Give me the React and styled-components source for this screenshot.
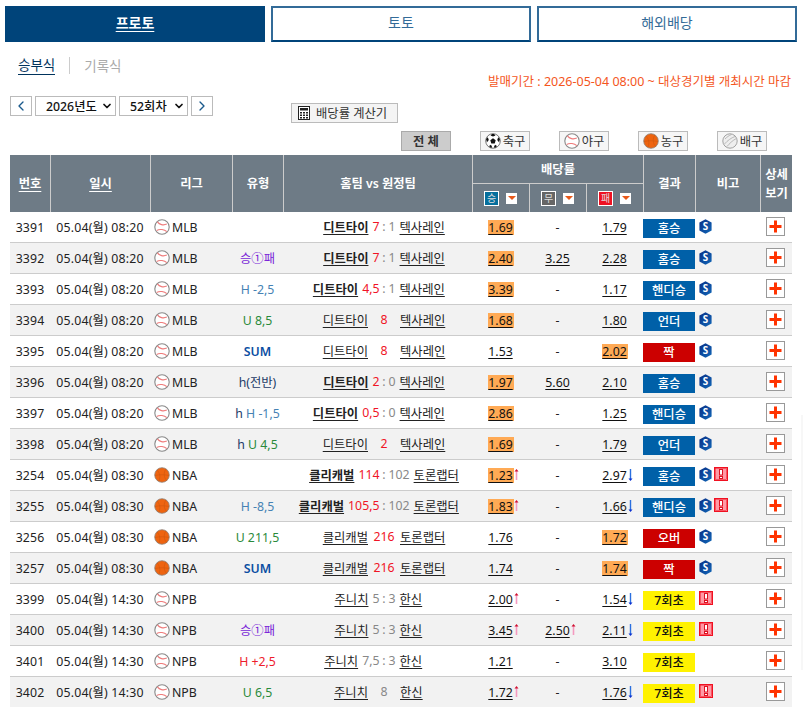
import React from 'react';
import styled, { createGlobalStyle } from 'styled-components';
import { ChevronLeft, ChevronRight, ChevronDown } from 'lucide-react';

const GlobalStyle = createGlobalStyle`
	html, body {
		margin: 0;
		padding: 0;
		background: #fff;
		overflow: hidden;
	}
	body {
		font-family: "Noto Sans", "Noto Sans CJK KR", sans-serif;
		font-size: 12.3px;
		color: #222;
	}
`;

const Page = styled.div`
	position: relative;
	width: 803px;
	height: 707px;
	box-sizing: border-box;
	padding: 6px 6px 0 5px;
	overflow: hidden;
`;
const EdgeShade = styled.div`
	position: absolute;
	right: 0;
	top: 415px;
	width: 2px;
	height: 255px;
	background: #f7f7f7;
`;
const Tabs = styled.div`
	display: grid;
	grid-template-columns: repeat(3, 260px);
	gap: 6px;
`;
const Tab = styled.a`
	display: flex;
	align-items: center;
	justify-content: center;
	box-sizing: border-box;
	height: 36px;
	padding-bottom: 4px;
	font-size: 14px;
	border: 2px solid ${props => props.$active ? '#00447a' : '#336b98'};
	border-bottom-color: #00447a;
	background: ${props => props.$active ? '#00447a' : '#fff'};
	color: ${props => props.$active ? '#fff' : '#336b98'};
	font-weight: ${props => props.$active ? 600 : 400};
	text-decoration: ${props => props.$active ? 'underline' : 'none'};
	text-underline-offset: 3px;
`;
const SubBar = styled.div`
	display: flex;
	justify-content: space-between;
	align-items: flex-end;
	height: 47px;
	padding: 0 6px 0 13px;
`;
const SubTabs = styled.div`
	display: flex;
	align-items: center;
	align-self: flex-start;
	margin-top: 14px;
`;
const SubTab = styled.span`
	font-size: 13.5px;
	line-height: 18px;
	color: ${props => props.$active ? '#00335c' : '#aaa'};
	border-bottom: ${props => props.$active ? '1px solid #00335c' : '0'};
`;
const SubDivider = styled.i`
	width: 1px;
	height: 17px;
	margin: 0 14px;
	background: #ccc;
`;
const SalePeriod = styled.div`
	color: #f4561d;
	font-size: 12.5px;
	line-height: 14px;
`;
const ControlRow = styled.div`
	display: flex;
	align-items: flex-start;
	gap: 3px;
	margin: 7px 0 0 5px;
	height: 28px;
`;
const RoundButton = styled.button`
	display: flex;
	align-items: center;
	justify-content: center;
	width: 22px;
	height: 20px;
	padding: 0;
	background: #fff;
	border: 1px solid #bbb;
	color: #1a5a8c;
`;
const SelectWrap = styled.div`
	position: relative;
	width: ${props => props.$width}px;
	height: 20px;
	svg {
		position: absolute;
		right: 3px;
		top: 4px;
		pointer-events: none;
		color: #111;
	}
`;
const Select = styled.select`
	appearance: none;
	width: 100%;
	height: 100%;
	box-sizing: border-box;
	padding: 0 0 0 10px;
	border: 1px solid #bbb;
	border-radius: 0;
	background: #fff;
	color: #111;
	font: 500 12.3px "Noto Sans", "Noto Sans CJK KR", sans-serif;
`;
const CalcButton = styled.button`
	display: flex;
	align-items: center;
	gap: 6px;
	box-sizing: border-box;
	width: 107px;
	height: 20px;
	margin: 7px 0 0 75px;
	padding: 0 0 0 6px;
	background: #f4f4f4;
	border: 1px solid #bbb;
	color: #333;
	font: 12.3px "Noto Sans", "Noto Sans CJK KR", sans-serif;
	white-space: nowrap;
`;
const FilterRow = styled.div`
	display: flex;
	gap: 29px;
	height: 24px;
	margin: 7px 0 0 396px;
`;
const FilterButton = styled.button`
	display: flex;
	align-items: center;
	justify-content: center;
	gap: 2px;
	box-sizing: border-box;
	width: 50px;
	height: 20px;
	padding: 0;
	border: 1px solid ${props => props.$active ? '#aaa' : '#bbb'};
	background: ${props => props.$active ? '#ccc' : '#f6f6f6'};
	color: #333;
	font: ${props => props.$active ? 700 : 400} 12.3px "Noto Sans", "Noto Sans CJK KR", sans-serif;
	white-space: nowrap;
`;
const Table = styled.table`
	width: 782px;
	margin-left: 5px;
	table-layout: fixed;
	border-collapse: separate;
	border-spacing: 0;
`;
const Th = styled.th`
	box-sizing: border-box;
	height: ${props => props.$sub ? 28 : 29}px;
	padding: 0;
	background: #6e7b86;
	color: #fff;
	font-size: 12.3px;
	font-weight: 600;
	line-height: 19px;
	text-align: center;
	border-left: ${props => props.$first ? '0' : '1px solid #ccc'};
	border-bottom: ${props => props.$split ? '1px solid #ccc' : '0'};
	text-decoration: ${props => props.$link ? 'underline' : 'none'};
	text-underline-offset: 3px;
`;
const SortCell = styled.div`
	display: flex;
	align-items: center;
	justify-content: flex-start;
	gap: 7px;
	padding-left: 11px;
`;
const OutcomeMark = styled.span`
	display: flex;
	align-items: center;
	justify-content: center;
	box-sizing: border-box;
	width: 15px;
	height: 15px;
	border: 1px solid #fff;
	background: ${props => props.$bg};
	color: #ddd;
	font-size: 10px;
	font-weight: 400;
	line-height: 1;
`;
const SortButton = styled.span`
	display: flex;
	align-items: center;
	justify-content: center;
	width: 11px;
	height: 11px;
	background: #fff;
	&::after {
		content: '';
		border: 4px solid transparent;
		border-top: 4px solid #e8591a;
		border-bottom: 0;
	}
`;
const Row = styled.tr`
	background: ${props => props.$alt ? '#f2f2f2' : '#fff'};
`;
const Td = styled.td`
	box-sizing: border-box;
	height: 31px;
	padding: 0;
	border-bottom: 1px solid #ccc;
	text-align: center;
	white-space: nowrap;
	color: #222;
`;
const NumberText = styled.span`
	letter-spacing: ${props => props.$spread}px;
`;
const LeagueCell = styled.div`
	display: flex;
	align-items: center;
	gap: 2px;
	padding-left: 4px;
`;
const TypeLabel = styled.span`
	color: ${props => props.$color};
	font-weight: ${props => props.$bold ? 600 : 400};
`;
const Match = styled.div`
	display: grid;
	grid-template-columns: 1fr auto 1fr;
	padding-left: 13px;
`;
const HomeSide = styled.div`
	display: flex;
	justify-content: flex-end;
	gap: 4px;
`;
const AwaySide = styled.div`
	display: flex;
	justify-content: flex-start;
	gap: 4px;
`;
const Colon = styled.span`
	width: 9px;
	color: #888;
	text-align: center;
`;
const Total = styled.span`
	min-width: 32px;
	color: ${props => props.$muted ? '#888' : '#f01426'};
	text-align: center;
`;
const Team = styled.a`
	color: #222;
	font-weight: ${props => props.$bold ? 600 : 400};
	text-decoration: underline;
	text-underline-offset: 2px;
`;
const Score = styled.span`
	color: ${props => props.$red ? '#f01426' : '#888'};
`;
const Odd = styled.span`
	position: relative;
	display: inline-block;
	min-width: 26px;
	line-height: 15px;
	color: #111;
	background: ${props => props.$hit ? '#ffaa55' : 'transparent'};
	text-decoration: underline;
	text-underline-offset: 2px;
	svg {
		position: absolute;
		left: 100%;
		top: 0;
	}
`;
const ResultCell = styled(Td)`
	vertical-align: top;
	padding-top: 7px;
`;
const ResultBadge = styled.div`
	height: 19px;
	line-height: 19px;
	font-weight: 500;
	background: ${props => props.$bg};
	color: ${props => props.$fg};
`;
const NoteCell = styled(Td)`
	vertical-align: top;
	padding-top: 7px;
`;
const Notes = styled.div`
	display: flex;
	align-items: flex-start;
	gap: 2px;
	padding-left: 4px;
`;
const DetailCell = styled(Td)`
	vertical-align: top;
	padding-top: 5px;
`;
const PlusBox = styled.button`
	display: block;
	box-sizing: border-box;
	width: 19px;
	height: 19px;
	margin: 0 0 0 6px;
	padding: 0;
	border: 1px solid #999;
	background: #fff;
	line-height: 0;
`;

const Baseball = ({ size = 16 }) => (
	<svg width={size} height={size} viewBox="0 0 16 16">
		<circle cx="8" cy="8" r="7.200" fill="#fff" stroke="#888" strokeWidth="1.100" />
		<path d="M3.400 2.900c2 2.800 6 3.800 9.400 2.200M2.600 11.400c3.200-1.700 7.800-1 10.200 1.300" fill="none" stroke="#ef7b7b" strokeWidth="1.100" />
	</svg>
);
const Basketball = ({ size = 16 }) => (
	<svg width={size} height={size} viewBox="0 0 16 16">
		<circle cx="8" cy="8" r="7.300" fill="#ee6410" stroke="#8a8078" strokeWidth="0.800" />
		<path d="M3 3c3 3 3.500 7 2 11M12 1.800c-2.500 3.500-2.500 9 1 12M1 8.500c4-1 10-1 14 0" fill="none" stroke="#c8540e" strokeWidth="0.500" />
	</svg>
);
const SoccerBall = () => (
	<svg width="16" height="16" viewBox="0 0 16 16">
		<circle cx="8" cy="8" r="7.300" fill="#fff" stroke="#555" strokeWidth="0.800" />
		<path d="M8 5.300l2.700 2-1 3.200H6.300l-1-3.200zM7 .9l2 0 1.500 1.500-2.500 1-2.500-1zM1 6l1.800-1.800 1 2.800-1.800 2.300zM15 6l-1.800-1.800-1 2.800 1.800 2.300zM4 13l2-1.300 1.300 2.800-1.800.2zM12 13l-2-1.300-1.300 2.800 1.800.2z" fill="#111" />
	</svg>
);
const Volleyball = () => (
	<svg width="16" height="16" viewBox="0 0 16 16">
		<circle cx="8" cy="8" r="7.200" fill="#eee" stroke="#999" strokeWidth="0.900" />
		<path d="M2.500 11c3-3.500 6.500-6 10.500-7.500M5 13.500c2.500-3 5.500-6 9.300-8M3 6c2-2 4-3.500 6.500-4.500" fill="none" stroke="#aaa" strokeWidth="0.800" />
	</svg>
);
const Calculator = () => (
	<svg width="12" height="14" viewBox="0 0 12 14">
		<rect x="0.500" y="0.500" width="11" height="13" fill="#fff" stroke="#222" />
		<rect x="2" y="2" width="8" height="2.500" fill="#222" />
		<path d="M2 6h2v1.500H2zM5 6h2v1.500H5zM8 6h2v1.500H8zM2 8.500h2V10H2zM5 8.500h2V10H5zM8 8.500h2V10H8zM2 11h2v1.500H2zM5 11h2v1.500H5zM8 11h2v1.500H8z" fill="#222" />
	</svg>
);
const SpecialIcon = () => (
	<svg width="13" height="15" viewBox="0 0 13 16">
		<defs>
			<linearGradient id="hexFill" x1="0" y1="0" x2="1" y2="1">
				<stop offset="0" stopColor="#0a2f86" />
				<stop offset="1" stopColor="#1168b8" />
			</linearGradient>
		</defs>
		<path d="M6.500 0.300L13 3.800v8.400l-6.500 3.600L0 12.200V3.800z" fill="url(#hexFill)" />
		<text x="6.500" y="11.800" textAnchor="middle" fill="#fff" fontSize="10.500" fontWeight="700" fontFamily="Noto Sans">S</text>
	</svg>
);
const AlertIcon = () => (
	<svg width="14" height="14" viewBox="0 0 14 14">
		<rect x="0.500" y="0.500" width="13" height="13" fill="#ff9aa6" stroke="#f01020" />
		<rect x="1.500" y="1.500" width="11" height="11" fill="none" stroke="#f01020" strokeWidth="0.500" />
		<rect x="5.500" y="2.500" width="3" height="5.500" fill="#fff" stroke="#e01020" />
		<rect x="5.500" y="9.500" width="3" height="2" fill="#fff" stroke="#e01020" />
	</svg>
);
const PlusIcon = () => (
	<svg width="17" height="17" viewBox="0 0 17 17">
		<path d="M7 2.500h3V7h4.500v3H10v4.500H7V10H2.500V7H7z" fill="#ff3300" />
	</svg>
);
const UpArrow = () => (
	<svg width="5" height="14" viewBox="0 0 5 14">
		<path d="M2.500 3v9" stroke="#f49ac0" strokeWidth="1.600" />
		<path d="M0.500 3.500L2.500 1l2 2.500z" fill="#d01030" />
	</svg>
);
const DownArrow = () => (
	<svg width="5" height="14" viewBox="0 0 5 14">
		<path d="M2.500 1v10" stroke="#2a6fe0" strokeWidth="1.400" />
		<path d="M0.500 10.500L2.500 13l2-2.500z" fill="#0a30d0" />
	</svg>
);

const TONES = {
	purple: '#7a1fd8',
	blue: '#4682b4',
	green: '#2a8a3a',
	navy: '#0b4ea2',
	red: '#ee1c2c',
	dark: '#1c3a66',
};
const RESULTS = {
	blue: { bg: '#0060a8', fg: '#fff' },
	red: { bg: '#cc0000', fg: '#fff' },
	yellow: { bg: '#fff200', fg: '#111' },
};

const mlb = { date: '05.04(월) 08:20', league: 'MLB', ball: 'base', home: '디트타이', away: '텍사레인' };
const nba0 = { date: '05.04(월) 08:30', league: 'NBA', ball: 'basket', home: '클리캐벌', away: '토론랩터' };
const npb = { date: '05.04(월) 14:30', league: 'NPB', ball: 'base', home: '주니치', away: '한신' };

const rows = [
	{ ...mlb, no: 3391, hs: '7', as: '1', red: true, bold: true, odds: [['1.69', 1], null, ['1.79']], res: '홈승', rc: 'blue', s: true },
	{ ...mlb, no: 3392, type: [['승①패', 'purple']], hs: '7', as: '1', red: true, bold: true, odds: [['2.40', 1], ['3.25'], ['2.28']], res: '홈승', rc: 'blue', s: true },
	{ ...mlb, no: 3393, type: [['H -2,5', 'blue']], hs: '4,5', as: '1', red: true, bold: true, odds: [['3.39', 1], null, ['1.17']], res: '핸디승', rc: 'blue', s: true },
	{ ...mlb, no: 3394, type: [['U 8,5', 'green']], total: '8', odds: [['1.68', 1], null, ['1.80']], res: '언더', rc: 'blue', s: true },
	{ ...mlb, no: 3395, type: [['SUM', 'navy', true]], total: '8', odds: [['1.53'], null, ['2.02', 1]], res: '짝', rc: 'red', s: true },
	{ ...mlb, no: 3396, type: [['h(전반)', 'dark']], hs: '2', as: '0', red: true, bold: true, odds: [['1.97', 1], ['5.60'], ['2.10']], res: '홈승', rc: 'blue', s: true },
	{ ...mlb, no: 3397, type: [['h ', 'dark'], ['H -1,5', 'blue']], hs: '0,5', as: '0', red: true, bold: true, odds: [['2.86', 1], null, ['1.25']], res: '핸디승', rc: 'blue', s: true },
	{ ...mlb, no: 3398, type: [['h ', 'dark'], ['U 4,5', 'green']], total: '2', odds: [['1.69', 1], null, ['1.79']], res: '언더', rc: 'blue', s: true },
	{ ...nba0, no: 3254, hs: '114', as: '102', red: true, bold: true, odds: [['1.23', 1, 'up'], null, ['2.97', 0, 'down']], res: '홈승', rc: 'blue', s: true, alert: true },
	{ ...nba0, no: 3255, type: [['H -8,5', 'blue']], hs: '105,5', as: '102', red: true, bold: true, odds: [['1.83', 1, 'up'], null, ['1.66', 0, 'down']], res: '핸디승', rc: 'blue', s: true, alert: true },
	{ ...nba0, no: 3256, type: [['U 211,5', 'green']], total: '216', odds: [['1.76'], null, ['1.72', 1]], res: '오버', rc: 'red', s: true },
	{ ...nba0, no: 3257, type: [['SUM', 'navy', true]], total: '216', odds: [['1.74'], null, ['1.74', 1]], res: '짝', rc: 'red', s: true },
	{ ...npb, no: 3399, hs: '5', as: '3', odds: [['2.00', 0, 'up'], null, ['1.54', 0, 'down']], res: '7회초', rc: 'yellow', alert: true },
	{ ...npb, no: 3400, type: [['승①패', 'purple']], hs: '5', as: '3', odds: [['3.45', 0, 'up'], ['2.50', 0, 'up'], ['2.11', 0, 'down']], res: '7회초', rc: 'yellow', alert: true },
	{ ...npb, no: 3401, type: [['H +2,5', 'red']], hs: '7,5', as: '3', odds: [['1.21'], null, ['3.10']], res: '7회초', rc: 'yellow' },
	{ ...npb, no: 3402, type: [['U 6,5', 'green']], total: '8', muted: true, odds: [['1.72', 0, 'up'], null, ['1.76', 0, 'down']], res: '7회초', rc: 'yellow', alert: true },
];

const COLS = [40, 100, 82, 51, 189, 57, 57, 57, 52, 65, 32];

function OddValue({ odd }) {
	if (!odd) return '-';
	const [value, hit, move] = odd;
	return (
		<Odd $hit={hit}>
			{value}
			{move === 'up' && <UpArrow />}
			{move === 'down' && <DownArrow />}
		</Odd>
	);
}

function MatchCell({ row }) {
	return (
		<Match>
			<HomeSide>
				<Team $bold={row.bold}>{row.home}</Team>
				{row.hs && <Score $red={row.red}>{row.hs}</Score>}
			</HomeSide>
			{row.total ? <Total $muted={row.muted}>{row.total}</Total> : <Colon>:</Colon>}
			<AwaySide>
				{row.as && <Score>{row.as}</Score>}
				<Team>{row.away}</Team>
			</AwaySide>
		</Match>
	);
}

export default function App() {
	return (
		<Page>
			<GlobalStyle />
			<Tabs>
				<Tab $active>프로토</Tab>
				<Tab>토토</Tab>
				<Tab>해외배당</Tab>
			</Tabs>
			<SubBar>
				<SubTabs>
					<SubTab $active>승부식</SubTab>
					<SubDivider />
					<SubTab>기록식</SubTab>
				</SubTabs>
				<SalePeriod>발매기간 : 2026-05-04 08:00 ~ 대상경기별 개최시간 마감</SalePeriod>
			</SubBar>
			<ControlRow>
				<RoundButton><ChevronLeft size={16} strokeWidth={2} /></RoundButton>
				<SelectWrap $width={81}>
					<Select defaultValue="2026"><option value="2026">2026년도</option></Select>
					<ChevronDown size={12} strokeWidth={3.500} />
				</SelectWrap>
				<SelectWrap $width={69}>
					<Select defaultValue="52"><option value="52">52회차</option></Select>
					<ChevronDown size={12} strokeWidth={3.500} />
				</SelectWrap>
				<RoundButton><ChevronRight size={16} strokeWidth={2} /></RoundButton>
				<CalcButton><Calculator />배당률 계산기</CalcButton>
			</ControlRow>
			<FilterRow>
				<FilterButton $active>전 체</FilterButton>
				<FilterButton><SoccerBall />축구</FilterButton>
				<FilterButton><Baseball />야구</FilterButton>
				<FilterButton><Basketball />농구</FilterButton>
				<FilterButton><Volleyball />배구</FilterButton>
			</FilterRow>
			<Table>
				<colgroup>
					{COLS.map((w, i) => <col key={i} width={w} />)}
				</colgroup>
				<thead>
					<tr>
						<Th rowSpan={2} $first $link>번호</Th>
						<Th rowSpan={2} $link>일시</Th>
						<Th rowSpan={2}>리그</Th>
						<Th rowSpan={2}>유형</Th>
						<Th rowSpan={2}>홈팀 vs 원정팀</Th>
						<Th colSpan={3} $split>배당률</Th>
						<Th rowSpan={2}>결과</Th>
						<Th rowSpan={2}>비고</Th>
						<Th rowSpan={2}>상세<br />보기</Th>
					</tr>
					<tr>
						<Th $sub><SortCell><OutcomeMark $bg="#056f9d">승</OutcomeMark><SortButton /></SortCell></Th>
						<Th $sub><SortCell><OutcomeMark $bg="#666">무</OutcomeMark><SortButton /></SortCell></Th>
						<Th $sub><SortCell><OutcomeMark $bg="#ee1122">패</OutcomeMark><SortButton /></SortCell></Th>
					</tr>
				</thead>
				<tbody>
					{rows.map((row, index) => (
						<Row key={row.no} $alt={index % 2 === 1}>
							<Td><NumberText $spread={0.15}>{row.no}</NumberText></Td>
							<Td><NumberText $spread={0.2}>{row.date}</NumberText></Td>
							<Td>
								<LeagueCell>
									{row.ball === 'basket' ? <Basketball /> : <Baseball />}
									{row.league}
								</LeagueCell>
							</Td>
							<Td>
								{row.type && row.type.map(([text, tone, bold]) => (
									<TypeLabel key={text} $color={TONES[tone]} $bold={bold}>{text}</TypeLabel>
								))}
							</Td>
							<Td><MatchCell row={row} /></Td>
							{row.odds.map((odd, i) => <Td key={i}><OddValue odd={odd} /></Td>)}
							<ResultCell>
								<ResultBadge $bg={RESULTS[row.rc].bg} $fg={RESULTS[row.rc].fg}>{row.res}</ResultBadge>
							</ResultCell>
							<NoteCell>
								<Notes>
									{row.s && <SpecialIcon />}
									{row.alert && <AlertIcon />}
								</Notes>
							</NoteCell>
							<DetailCell>
								<PlusBox><PlusIcon /></PlusBox>
							</DetailCell>
						</Row>
					))}
				</tbody>
			</Table>
			<EdgeShade />
		</Page>
	);
}
